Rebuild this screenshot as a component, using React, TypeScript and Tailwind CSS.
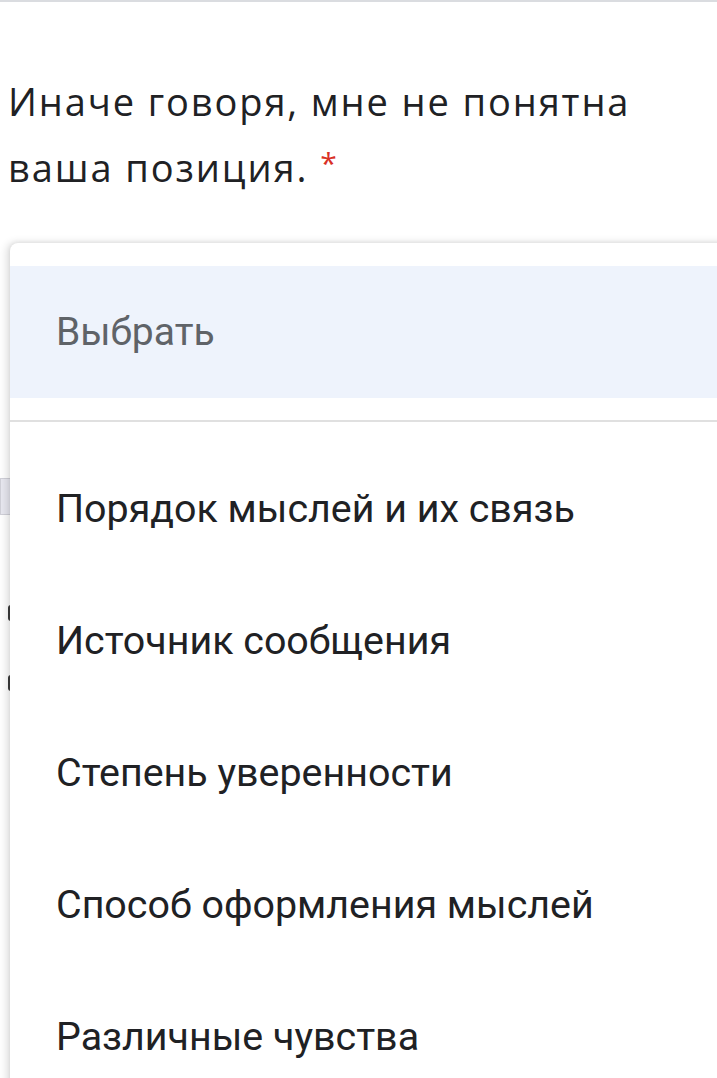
import React from "react"

const options = [
  "Порядок мыслей и их связь",
  "Источник сообщения",
  "Степень уверенности",
  "Способ оформления мыслей",
  "Различные чувства",
]

export default function App() {
  return (
    <div className="relative w-[717px] h-[1078px] overflow-hidden bg-white font-['Roboto',sans-serif]">
      {/* top border */}
      <div className="h-[2px] bg-[#dadce0]" />

      {/* question */}
      <div className="px-2 pt-[66px] pr-[40px]">
        <h2 className="font-['Open_Sans',sans-serif] text-[38px] leading-[66px] tracking-[1.9px] text-[#202124]">
          Иначе говоря, мне не понятна ваша позиция.
          <span className="ml-[12px] align-top relative top-[-4px] text-[30px] text-[#d93025] tracking-normal">*</span>
        </h2>
      </div>

      {/* underlying form bits peeking out on the left */}
      <div className="absolute left-0 top-[478px] w-[14px] h-[37px] bg-[#e8e8f0] border border-[#d0d0d8]" />
      <div className="absolute left-[8px] top-[605px] w-[6px] h-[16px] rounded-full bg-[#3c3c3c]" />
      <div className="absolute left-[8px] top-[675px] w-[6px] h-[16px] rounded-full bg-[#3c3c3c]" />

      {/* dropdown menu */}
      <div className="absolute left-[10px] top-[243px] w-[760px] h-[900px] bg-white rounded-tl-lg shadow-[-3px_0_8px_rgba(0,0,0,0.14),0_-1px_4px_rgba(0,0,0,0.06)]">
        <div className="pt-[23px]">
          <div className="h-[132px] bg-[#eef3fc] flex items-center pl-[46px]">
            <span className="text-[39px] text-[#5f6368]">Выбрать</span>
          </div>
        </div>
        <div className="mt-[22px] h-[2px] bg-[#e0e0e0]" />
        <div className="pt-[21px] flex flex-col">
          {options.map((o) => (
            <div key={o} className="h-[132px] flex items-center pl-[46px]">
              <span className="text-[39.4px] text-[#202124]">{o}</span>
            </div>
          ))}
        </div>
      </div>
    </div>
  )
}
